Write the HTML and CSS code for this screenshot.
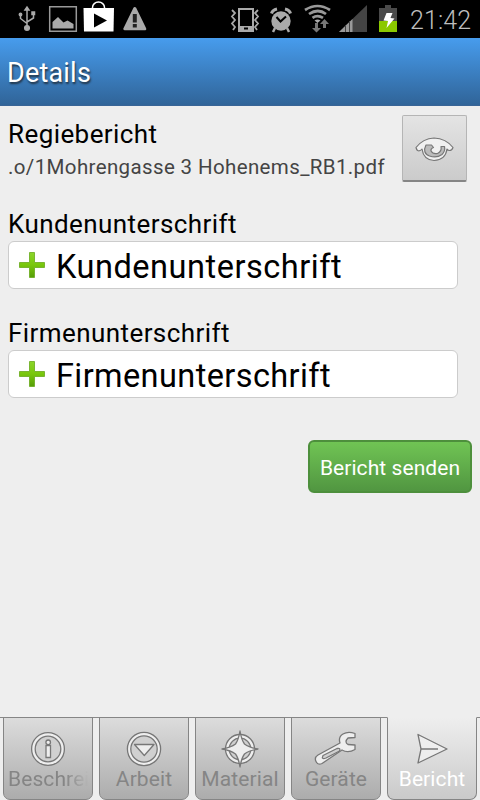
FILE: index.html
```
<!DOCTYPE html>
<html lang="de">
<head>
<meta charset="utf-8">
<title>Details</title>
<link rel="stylesheet" href="styles.css">
</head>
<body>
<div class="screen">
  <div class="status">
    <svg class="status-icons" width="410" height="38" viewBox="0 0 410 38">
      <g fill="none" stroke="#aaa" stroke-width="1.5">
        <path d="M27 8v20M20.500 15v3.500l6.500 5M33.500 15v3l-6.500 4"/>
        <path d="M25 10l2-3 2 3z" fill="#aaa"/>
        <circle cx="27" cy="28" r="2.300" fill="#aaa"/>
        <circle cx="20.500" cy="14.500" r="1.200" fill="#aaa"/>
        <path d="M32 12h2.500v2.500H32z" fill="#aaa"/>
      </g>
      <path d="M49.700 6.700h26.600v24.600H49.700z" fill="none" stroke="#999" stroke-width="1.500"/>
      <path d="M52.500 28.500v-6.500l5.500-5 5.500 5.500 4-2 6 3.500v4.500z" fill="#aaa"/>
      <path d="M92.500 9V7.500a6 5.500 0 0 1 12 0V9" fill="none" stroke="#fff" stroke-width="1.500"/>
      <path d="M83.500 8h30.500l-.5 23.500h-29.500z" fill="#fff"/>
      <path d="M94 13.500v14l13-7z"/>
      <path d="M134.800 8.500l10 20.300H124.800z" fill="#aaa" stroke="#aaa" stroke-width="3" stroke-linejoin="round"/>
      <path d="M132.800 14h4v8.500h-4zM132.800 24h4v3.500h-4z" fill="#222"/>
      <path d="M239 9h14v22h-14z" fill="none" stroke="#aaa" stroke-width="2"/>
      <path d="M238 26h16v6h-16z" fill="#aaa"/><path d="M244 27.500h4v2h-4z"/>
      <path d="M232 10l3 3-3 3.500 3 3.500-3 3.500 3 3.500-2 3M258 10l-3 3 3 3.500-3 3.500 3 3.500-3 3.500 2 3" fill="none" stroke="#aaa" stroke-width="1.800"/>
      <circle cx="281" cy="21" r="9.700" fill="#aaa"/>
      <path d="M275 28l-2 4M287 28l2 4" stroke="#aaa" stroke-width="2.500"/>
      <path d="M271.500 13.500q1-3.500 5.500-4.500M290.500 13.500q-1-3.500-5.500-4.500" fill="none" stroke="#aaa" stroke-width="3"/>
      <path d="M276.500 17l4 4.500 5.500-5" fill="none" stroke="#000" stroke-width="2"/>
      <g fill="none" stroke="#999" stroke-width="2.700">
        <path d="M305 10q12.500-8 25 0M309 14q9-6 17 0M312.500 17.900q5-3.500 10.500 0"/>
      </g>
      <path d="M314.500 20.500q3-2 6 0l-3 2.500z" fill="#aaa"/>
      <path d="M315 23h3v5h3l-4.500 4.500-4.500-4.500h3zM323 28v-4h-3l4.500-5 4.500 5h-3v4z" fill="#777"/>
      <path d="M367 5v27h-28z" fill="#444"/>
      <path d="M352.500 19V32h-13.500z" fill="#999"/><path d="M345.500 25v7M349.500 21v11" stroke="#444"/>
      <path d="M385 5h6v3h6v13h-18V8h6z" fill="#4a4a4a"/>
      <path d="M379 21h18v11h-18z" fill="#8bc800"/>
      <path d="M386.500 13h6l-2 5 4 .5-8 9.500 1.500-7-4.500-.5z" fill="#fff"/>
    </svg>
    <span class="clock">21:42</span>
  </div>
  <header class="bar"><span class="bar-title">Details</span></header>
  <main class="content">
    <section class="report">
      <div>
        <div class="label report-label">Regiebericht</div>
        <div class="path">.o/1Mohrengasse 3 Hohenems_RB1.pdf</div>
      </div>
      <div class="view">
        <svg width="42" height="28" viewBox="0 0 42 28" stroke="#777" stroke-width="1.200" stroke-linejoin="round">
          <path fill="#f0f0f0" d="M2 12.500Q9 3.500 20 3q12 .5 19 9.500-1 3-3.500 3-2 0-2.500-1.500-1.500 11-13 11.500-10.500-.5-12-11.500-2 2.500-4.500 1.500Q2.500 14.500 2 12.500z"/>
          <path fill="#bbb" d="M17.500 10h-5.500Q8 18 15.500 21q7 2.500 12.500-1.500 3.500-3.500 2.500-8h-3.500q1 5-3.500 7-4.500 1-6.500-2.500-.5-2.500 2.500-3.500z"/>
        </svg>
      </div>
    </section>
    <div class="label customer-label">Kundenunterschrift</div>
    <div class="field">
      <svg class="plus" width="26" height="26" viewBox="0 0 26 26"><defs><linearGradient id="g" x2="0" y2="1"><stop stop-color="#8bd52a"/><stop offset=".5" stop-color="#79c70c"/><stop offset="1" stop-color="#559d08"/></linearGradient></defs><path d="M10.500.500h5v10h10v5h-10v10h-5v-10H.5v-5h10z" fill="url(#g)" stroke="#68a81a" stroke-width=".8" stroke-linejoin="round"/></svg>
      <span class="customer-text">Kundenunterschrift</span>
    </div>
    <div class="label company-label">Firmenunterschrift</div>
    <div class="field">
      <svg class="plus" width="26" height="26" viewBox="0 0 26 26"><path d="M10.500.500h5v10h10v5h-10v10h-5v-10H.5v-5h10z" fill="url(#g)" stroke="#68a81a" stroke-width=".8" stroke-linejoin="round"/></svg>
      <span class="company-text">Firmenunterschrift</span>
    </div>
    <div class="send"><span>Bericht senden</span></div>
  </main>
  <nav class="tabs">
    <div class="tab">
      <svg width="40" height="40" viewBox="0 0 40 40" fill="#eee" stroke="#777" stroke-width="1.300"><circle cx="20" cy="20" r="16.400"/><circle cx="20" cy="20" r="12.800" fill="#d0d0d0"/><path d="M18 16.500h4.500v12H18z"/><circle cx="20.200" cy="13.300" r="2.300"/></svg>
      <span class="tab-name fade">Beschrei</span>
    </div>
    <div class="tab">
      <svg width="40" height="40" viewBox="0 0 40 40" fill="#eee" stroke="#777" stroke-width="1.300" stroke-linejoin="round"><circle cx="20" cy="20" r="16.600"/><circle cx="20" cy="20" r="13.200" fill="#d0d0d0"/><path d="M10.500 15.500h19.500l-9.700 11z"/></svg>
      <span class="tab-name">Arbeit</span>
    </div>
    <div class="tab">
      <svg width="40" height="40" viewBox="0 0 40 40" fill="#eee" stroke="#777" stroke-width="1.300" stroke-linejoin="round"><circle cx="20" cy="20" r="14.500"/><circle cx="20" cy="20" r="10.800" fill="#d0d0d0"/><path d="M20 2q1.500 9 4.500 13 4.500 3.500 13.500 5-9 1.500-13.500 5-3 4-4.500 13-1.500-9-4.500-13-4.500-3.500-13.500-5 9-1.500 13.500-5 3-4 4.500-13z"/></svg>
      <span class="tab-name">Material</span>
    </div>
    <div class="tab">
      <svg width="46" height="40" viewBox="0 0 46 40" fill="#eee" stroke="#777" stroke-width="1.300" stroke-linejoin="round"><path d="M27 14q-2-6 3-9 5-3 12-.5v4l-7 .5q-4 4 0 6.500l7 .5v4.500q-7 4-13 .500L9 34.500q-4 2-6-2-2-4 2-6.500z"/><path d="M10 26.500l14-7q4-1 2.500 2.500L13 29q-5 2-3-2.500z" fill="#d0d0d0"/></svg>
      <span class="tab-name">Geräte</span>
    </div>
    <div class="tab active">
      <svg width="40" height="40" viewBox="0 0 40 40" fill="#eee" stroke="#777" stroke-width="1.300" stroke-linejoin="round"><path d="M6 5.500l29 14.500L6 34l3-14z"/><path d="M9 20h17"/></svg>
      <span class="tab-name">Bericht</span>
    </div>
  </nav>
</div>
</body>
</html>
```
FILE: styles.css
```
* { box-sizing: border-box; }
body { margin: 0; font-family: Roboto, sans-serif; }
.screen { width: 480px; height: 800px; display: flex; flex-direction: column; background: #eee; overflow: hidden; white-space: nowrap; }
.status { height: 38px; display: flex; background: #000; }
.status-icons { flex: none; }
.clock { font-size: 25px; line-height: 41px; letter-spacing: .1px; color: #bebebe; font-weight: 300; }
.bar { height: 68px; padding-left: 7px; background: linear-gradient(#479ced, #306498); border-bottom: 1px solid #386496; color: #fff; font-size: 27px; line-height: 71px; letter-spacing: .2px; text-shadow: 1px 2px 2px #234; }
.content { flex: 1; padding: 9px 8px 0; }
.report { display: flex; justify-content: space-between; height: 94px; }
.label { font-size: 26px; line-height: 32px; letter-spacing: .42px; color: #000; }
.report-label { margin-top: 3px; }
.path { font-size: 20.5px; line-height: 34px; letter-spacing: .37px; color: #444; }
.view { width: 65px; height: 67px; margin-right: 5px; display: flex; align-items: center; justify-content: center; border: 1px solid #b5b5b5; border-bottom: 2px solid #858585; border-radius: 2px; background: linear-gradient(#e4e4e4, #cbcbcb); }
.view svg { margin-top: 2px; }
.customer-label { margin-top: -1px; }
.field { width: 450px; height: 48px; margin-top: 1px; padding-left: 10px; display: flex; align-items: center; gap: 11px; border: 1px solid #ccc; border-radius: 6px; background: #fff; font-size: 32.5px; line-height: 48px; }
.field span { padding-top: 3px; }
.customer-text { letter-spacing: .53px; }
.company-text { letter-spacing: .4px; }
.plus { flex: none; }
.company-label { margin-top: 28px; }
.send { width: 164px; height: 53px; margin: 42px 0 0 auto; border: 2px solid #4d8f3c; border-radius: 6px; background: linear-gradient(#70c454, #519641); color: #fff; text-align: center; font-size: 21px; line-height: 52px; letter-spacing: .07px; }
.tabs { height: 84px; padding: 0 3px; display: flex; gap: 6px; background: linear-gradient(#eee 1px, #888 1px, #888 2px, #eee 2px); }
.tab { width: 90px; height: 83px; margin-top: 1px; padding: 11px 4px 0; display: flex; flex-direction: column; align-items: center; border: 1px solid #858585; border-radius: 0 0 7px 7px; background: linear-gradient(#dcdcdc, #acacac); color: #858585; overflow: hidden; }
.tab svg { flex: none; }
.tab-name { font-size: 21px; line-height: 24px; margin-top: -2px; letter-spacing: .1px; }
.fade { width: 100%; -webkit-mask-image: linear-gradient(90deg, #000 72%, transparent); mask-image: linear-gradient(90deg, #000 72%, transparent); }
.active { border-top-color: #eee; background: linear-gradient(#eee, #cacaca); color: #fff; }
```
